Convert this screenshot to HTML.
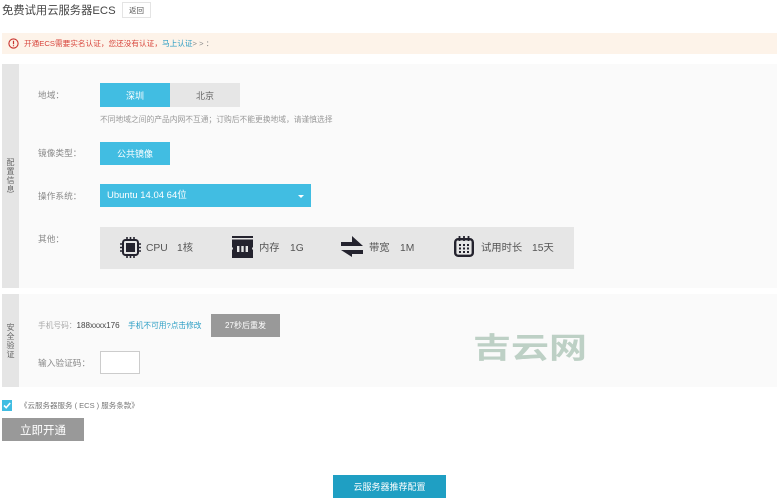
<!DOCTYPE html>
<html lang="zh"><head><meta charset="utf-8"><style>
html,body{margin:0;padding:0;background:#fff}
body{width:779px;height:500px;overflow:hidden;position:relative;font-family:"Liberation Sans","Noto Sans CJK SC",sans-serif;font-size:9px;color:#888}
.a{position:absolute;white-space:nowrap}
.c{display:flex;align-items:center;justify-content:center}
.lb{left:38px;font-size:8.7px;color:#8a8a8a;line-height:12px}
.v{width:10px;left:5.5px;font-size:8px;line-height:9px;white-space:normal;text-align:center;color:#666}
.t{font-size:10.3px;color:#555;line-height:14px;top:241.5px}
svg{position:absolute;overflow:visible}
</style></head><body>
<div class="a" style="left:2px;top:3px;font-size:11.3px;line-height:16px;color:#444">免费试用云服务器ECS</div>
<div class="a c" style="left:122px;top:2px;width:29px;height:16px;border:1px solid #e4e4e4;box-sizing:border-box;font-size:7.5px;color:#555">返回</div>

<div class="a" style="left:2px;top:33px;width:775px;height:21px;background:#fdf3e9"></div>
<svg style="left:8px;top:38px" width="11" height="11" viewBox="0 0 11 11"><circle cx="5.5" cy="5.5" r="4.6" fill="none" stroke="#c8322d" stroke-width="1.1"/><path d="M5.5 2.8V6.2M5.5 7.2V8.3" stroke="#c8322d" stroke-width="1.2"/></svg>
<div class="a" style="left:24px;top:38px;font-size:7.65px;line-height:12px;color:#d8453c">开通ECS需要实名认证，您还没有认证，<span style="color:#2a9dc4">马上认证</span><span style="color:#888">&gt; &gt; ：</span></div>

<div class="a" style="left:2px;top:64px;width:775px;height:224px;background:#fafafa"></div>
<div class="a" style="left:2px;top:64px;width:17px;height:224px;background:#e5e5e5"></div>
<div class="a v" style="top:158px">配置信息</div>

<div class="a lb" style="top:89px">地域：</div>
<div class="a c" style="left:100px;top:83px;width:70px;height:24px;background:#41bde2;color:#fff;font-size:9px">深圳</div>
<div class="a c" style="left:170px;top:83px;width:70px;height:24px;background:#e6e6e6;color:#666;font-size:9px">北京</div>
<div class="a" style="left:100px;top:114px;font-size:7.75px;line-height:12px;color:#999">不同地域之间的产品内网不互通；订购后不能更换地域，请谨慎选择</div>

<div class="a lb" style="top:147px">镜像类型：</div>
<div class="a c" style="left:100px;top:142px;width:70px;height:23px;background:#41bde2;color:#fff;font-size:9px">公共镜像</div>

<div class="a lb" style="top:190px">操作系统：</div>
<div class="a" style="left:100px;top:184px;width:211px;height:23px;background:#41bde2"></div>
<div class="a" style="left:107px;top:189px;font-size:9.5px;line-height:13px;color:#fff">Ubuntu 14.04 64位</div>
<div class="a" style="left:298px;top:195px;width:0;height:0;border:3.5px solid transparent;border-top:3.5px solid #fff;border-bottom:0"></div>

<div class="a lb" style="top:233px">其他：</div>
<div class="a" style="left:100px;top:227px;width:474px;height:42px;background:#e6e6e6"></div>

<svg style="left:120px;top:237px" width="21" height="21" viewBox="0 0 21 21"><rect x="3" y="3" width="15" height="15" rx="2.5" fill="none" stroke="#24232e" stroke-width="2"/><rect x="6" y="6" width="9" height="9" fill="#24232e"/><path d="M7 0V3M10.5 0V3M14 0V3M7 18V21M10.5 18V21M14 18V21M0 7H3M0 10.5H3M0 14H3M18 7H21M18 10.5H21M18 14H21" stroke="#24232e" stroke-width="1.6"/></svg>
<div class="a t" style="left:146px">CPU</div><div class="a t" style="left:177px">1核</div>

<svg style="left:232px;top:236px" width="21" height="22" viewBox="0 0 21 22"><rect x="0" y="0" width="21" height="2" fill="#24232e"/><path d="M0 3.5H21V11Q19 12.5 21 14V22H0V14Q2 12.5 0 11Z" fill="#24232e"/><path d="M5 10H7.4V16H5ZM9.3 10H11.7V16H9.3ZM13.6 10H16V16H13.6Z" fill="#e6e6e6"/></svg>
<div class="a t" style="left:259px">内存</div><div class="a t" style="left:290px">1G</div>

<svg style="left:341px;top:236px" width="22" height="22" viewBox="0 0 22 22"><path d="M0 6H11V0L22 10H0Z" fill="#24232e"/><path d="M0 14H22V18H11V21Z" fill="#24232e"/></svg>
<div class="a t" style="left:369px">带宽</div><div class="a t" style="left:400px">1M</div>

<svg style="left:454px;top:236px" width="20" height="21" viewBox="0 0 20 21"><rect x="1.2" y="3.2" width="17.6" height="16.6" rx="3" fill="none" stroke="#24232e" stroke-width="2.4"/><path d="M5.5 0V5M10 0V5M14.5 0V5" stroke="#24232e" stroke-width="1.8"/><path d="M5 8H7V10H5ZM9 8H11V10H9ZM13 8H15V10H13ZM5 11.5H7V13.5H5ZM9 11.5H11V13.5H9ZM13 11.5H15V13.5H13ZM5 15H7V17H5ZM9 15H11V17H9ZM13 15H15V17H13Z" fill="#24232e"/></svg>
<div class="a t" style="left:481px">试用时长</div><div class="a t" style="left:532px">15天</div>

<div class="a" style="left:2px;top:294px;width:775px;height:93px;background:#fafafa"></div>
<div class="a" style="left:2px;top:294px;width:17px;height:93px;background:#e5e5e5"></div>
<div class="a v" style="top:323px">安全验证</div>

<div class="a" style="left:38px;top:320px;font-size:7.7px;line-height:12px;color:#aaa">手机号码：<span style="color:#444;font-size:8.1px">188xxxx176</span></div>
<div class="a" style="left:128px;top:320px;font-size:7.7px;line-height:12px;color:#2a9dc4">手机不可用?点击修改</div>
<div class="a c" style="left:211px;top:314px;width:69px;height:23px;background:#999;color:#fff;font-size:8px">27秒后重发</div>

<div class="a lb" style="top:357px">输入验证码：</div>
<div class="a" style="left:100px;top:351px;width:40px;height:23px;box-sizing:border-box;background:#fff;border:1px solid #ccc"></div>

<div class="a" style="left:473px;top:327px;font-size:38px;line-height:44px;font-weight:700;color:#bdd0c5;transform:scaleY(.76);transform-origin:50% 50%">吉云网</div>

<div class="a" style="left:2px;top:400px;width:10px;height:11px;background:#41bde2"></div>
<svg style="left:2px;top:400px" width="10" height="11" viewBox="0 0 10 11"><path d="M2 5.5L4.2 7.7L8.2 3" fill="none" stroke="#fff" stroke-width="1.6"/></svg>
<div class="a" style="left:20px;top:400px;font-size:7.5px;line-height:12px;color:#777">《云服务器服务 ( ECS ) 服务条款》</div>

<div class="a c" style="left:2px;top:418px;width:82px;height:23px;background:#999;color:#fff;font-size:11.5px">立即开通</div>
<div class="a c" style="left:333px;top:475px;width:113px;height:23px;background:#1f9fc3;color:#fff;font-size:9px">云服务器推荐配置</div>
</body></html>
